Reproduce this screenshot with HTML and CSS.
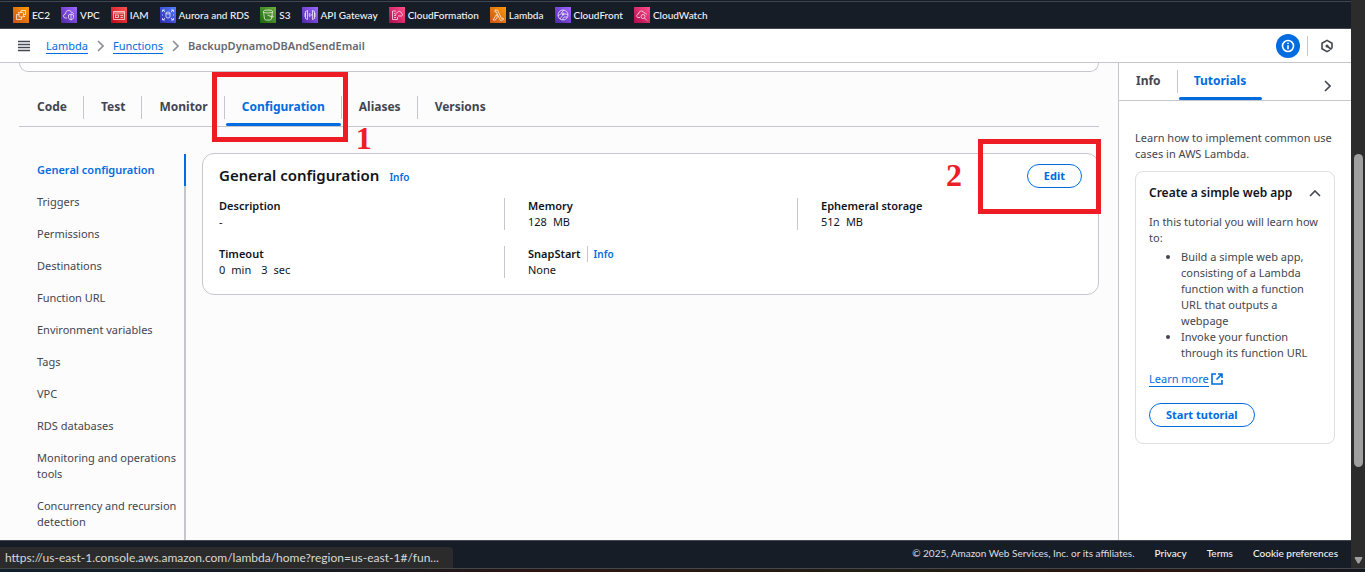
FILE: index.html
```html
<!DOCTYPE html>
<html lang="en">
<head>
<meta charset="utf-8">
<title>BackupDynamoDBAndSendEmail | Lambda</title>
<link rel="stylesheet" href="styles.css">
</head>
<body>
<div class="window">
  <div class="page">
    <nav class="services" aria-label="Favorite services">
      <a class="service" href="#"><svg class="service-icon orange" viewBox="0 0 16 16"><rect x="6" y="5.500" width="4.500" height="4.500" rx="1"/><path d="M6 7.500H3.500v5h5V10M8 5.500v-2h4.500v4h-2M10.500 9.500h1.500M5 5.500h1"/></svg>EC2</a>
      <a class="service" href="#"><svg class="service-icon purple" viewBox="0 0 16 16"><path d="M6 11H4.500a2 2 0 0 1 0-4c0-4 5-5 6-1.500 1.500 0 2 .5 2 1.500M7.500 8l2.500-1 2.500 1v2.500c0 1-1 1.800-2.500 2.500-1.500-.7-2.500-1.500-2.500-2.500zM10 7v6"/></svg>VPC</a>
      <a class="service" href="#"><svg class="service-icon red" viewBox="0 0 16 16"><path d="M2.500 4.500h11v8h-11zM2.500 6h11M9.500 8.500h2.500M9.500 10.500h2.500"/><rect x="4.500" y="8" width="3" height="2.500"/></svg>IAM</a>
      <a class="service" href="#"><svg class="service-icon blue" viewBox="0 0 16 16"><path d="M2.500 5V3H5M11 3h2.500v2M2.500 11v2H5M11 13h2.500v-2M3 3l2 2M13 3l-2 2M3 13l2-2M13 13l-2-2"/><ellipse cx="8" cy="6" rx="2" ry="1"/><path d="M6 6v4c0 1.300 4 1.300 4 0V6M2.500 7.500v1M13.500 7.500v1"/></svg>Aurora and RDS</a>
      <a class="service" href="#"><svg class="service-icon green" viewBox="0 0 16 16"><ellipse cx="8" cy="4.500" rx="4.500" ry="1.500"/><path d="M3.500 4.500l1 7.500c.3 1.500 6.700 1.500 7 0l1-7.500M7.500 8l4.500 2c2 .5 1-1 0-1.500"/></svg>S3</a>
      <a class="service" href="#"><svg class="service-icon purple" viewBox="0 0 16 16"><path d="M5.500 3.500l-2 1v7l2 1zM10.500 3.500l2 1v7l-2 1zM3 6v4M13 6v4M8 6L7 8l1 2M9 7v2"/></svg>API Gateway</a>
      <a class="service" href="#"><svg class="service-icon pink" viewBox="0 0 16 16"><path d="M7 4H3.500v8.500h5V10M5 8.500h2M5 10.500h2M5 6.500h1M9 9h3.500c1.500-.5 1.300-2.500 0-2.700C12 4 9 3.500 8.500 5.500 7 5.500 6.500 7 7 8"/></svg>CloudFormation</a>
      <a class="service" href="#"><svg class="service-icon orange" viewBox="0 0 16 16"><path d="M5 3h2.500l4 8.500 1.500-.5.500 1.500-3 1L7 6.500 6.500 5H5zM6.500 7.500L3 13h2.500l2-3.500z"/></svg>Lambda</a>
      <a class="service" href="#"><svg class="service-icon purple" viewBox="0 0 16 16"><circle cx="8" cy="8" r="5"/><path d="M3 9c2-2 3-1 4-4l2-2M5 12c1-3 3-2 3-5h3l2 1M8 13c-1-2 1-2 1-3h3"/><circle cx="8" cy="7" r="1"/></svg>CloudFront</a>
      <a class="service" href="#"><svg class="service-icon pink" viewBox="0 0 16 16"><path d="M6 10.500H4c-2-.5-1.500-3.500.5-3.500 0-3.500 5-4 5.500-1 1.500-.3 2 .5 2.500 1.500"/><circle cx="9" cy="9.500" r="2"/><path d="M10.500 11l2.500 2.500"/></svg>CloudWatch</a>
    </nav>

    <header class="topbar">
      <button class="icon-button menu-button" aria-label="Open navigation"><svg width="12" height="12" viewBox="0 0 12 12"><path d="M0 1.500h12M0 4.500h12M0 7.500h12M0 10.500h12"/></svg></button>
      <nav class="breadcrumbs" aria-label="Breadcrumbs">
        <a class="crumb" href="#">Lambda</a>
        <svg class="crumb-arrow" viewBox="0 0 7 12"><path d="M1 1l5 5-5 5"/></svg>
        <a class="crumb" href="#">Functions</a>
        <svg class="crumb-arrow" viewBox="0 0 7 12"><path d="M1 1l5 5-5 5"/></svg>
        <span class="crumb-current">BackupDynamoDBAndSendEmail</span>
      </nav>
      <div class="tools">
        <button class="icon-button info-button" aria-label="Info"><svg width="14" height="14" viewBox="0 0 14 14"><circle cx="7" cy="7" r="5.500"/><path d="M7 6.200v4M7 3.800v1.300"/></svg></button>
        <button class="icon-button hex-button" aria-label="Assistant"><svg width="14" height="14" viewBox="0 0 14 14"><path d="M12 9.500V4.200L7 1.400 2 4.200v5.600l5 2.800 2.800-1.500M7 7l4.500 3.500"/><circle class="dot" cx="7" cy="7" r="1.500"/></svg></button>
      </div>
    </header>

    <div class="body">
      <main class="content">
        <div class="overview-edge"></div>
        <nav class="tabs" aria-label="Function">
          <a class="tab" href="#"><span>Code</span></a>
          <a class="tab" href="#"><span>Test</span></a>
          <a class="tab" href="#"><span>Monitor</span></a>
          <a class="tab active" href="#" aria-current="page"><span>Configuration</span><i class="callout callout-tab"></i><b class="step step-one">1</b></a>
          <a class="tab" href="#"><span>Aliases</span></a>
          <a class="tab" href="#"><span>Versions</span></a>
        </nav>
        <div class="columns">
          <nav class="side" aria-label="Configuration">
            <a class="side-link current" href="#">General configuration</a>
            <a class="side-link" href="#">Triggers</a>
            <a class="side-link" href="#">Permissions</a>
            <a class="side-link" href="#">Destinations</a>
            <a class="side-link" href="#">Function URL</a>
            <a class="side-link" href="#">Environment variables</a>
            <a class="side-link" href="#">Tags</a>
            <a class="side-link" href="#">VPC</a>
            <a class="side-link" href="#">RDS databases</a>
            <a class="side-link" href="#">Monitoring and operations tools</a>
            <a class="side-link" href="#">Concurrency and recursion detection</a>
          </nav>
          <section class="card">
            <div class="card-head">
              <h2 class="card-title">General configuration</h2>
              <a class="info-link" href="#">Info</a>
              <button class="button edit">Edit</button>
            </div>
            <dl class="facts">
              <div class="fact"><dt>Description</dt><dd>-</dd></div>
              <div class="fact"><dt>Memory</dt><dd><span>128</span><span>MB</span></dd></div>
              <div class="fact"><dt>Ephemeral storage</dt><dd><span>512</span><span>MB</span></dd></div>
              <div class="fact"><dt>Timeout</dt><dd><span>0</span><span>min</span><span class="later">3</span><span>sec</span></dd></div>
              <div class="fact"><dt>SnapStart <a class="info-link split" href="#">Info</a></dt><dd>None</dd></div>
            </dl>
            <i class="callout callout-edit"></i><b class="step step-two">2</b>
          </section>
        </div>
      </main>

      <aside class="help">
        <div class="help-tabs">
          <a class="help-tab" href="#">Info</a>
          <a class="help-tab selected" href="#">Tutorials</a>
          <button class="icon-button collapse" aria-label="Close panel"><svg width="7" height="12" viewBox="0 0 7 12"><path d="M1 1l5 5-5 5"/></svg></button>
        </div>
        <div class="help-body">
          <p class="help-text">Learn how to implement common use cases in AWS Lambda.</p>
          <section class="tutorial">
            <div class="tutorial-head">
              <h3 class="tutorial-title">Create a simple web app</h3>
              <button class="icon-button" aria-label="Collapse tutorial"><svg width="12" height="7" viewBox="0 0 12 7"><path d="M1 6l5-5 5 5"/></svg></button>
            </div>
            <p class="help-text">In this tutorial you will learn how to:</p>
            <ul class="steps">
              <li>Build a simple web app, consisting of a Lambda function with a function URL that outputs a webpage</li>
              <li>Invoke your function through its function URL</li>
            </ul>
            <a class="learn" href="#"><span>Learn more</span><svg width="12" height="12" viewBox="0 0 12 12"><path d="M5 1H1v10h10V7M7 1h4v4M11 1L5.500 6.500"/></svg></a>
            <button class="button start">Start tutorial</button>
          </section>
        </div>
      </aside>
    </div>

    <footer class="footer">
      <span class="copyright">© 2025, Amazon Web Services, Inc. or its affiliates.</span>
      <a href="#">Privacy</a>
      <a href="#">Terms</a>
      <a href="#">Cookie preferences</a>
      <div class="status">https://us-east-1.console.aws.amazon.com/lambda/home?region=us-east-1#/fun...</div>
    </footer>
  </div>
  <div class="scrollbar"><div class="thumb"></div><svg class="down" viewBox="0 0 10 8"><path d="M1 0h8q1 1 0 2L6 7q-1 1-2 0L1 2Q0 1 1 0z"/></svg></div>
</div>
<div class="desktop-edge"></div>
</body>
</html>
```
FILE: styles.css
```css
* { box-sizing: border-box; }

body {
  margin: 0;
  display: flex;
  flex-direction: column;
  height: 100vh;
  overflow: hidden;
  background: #fcfcfd;
  color: #0f141a;
  font: 11px/16px "Noto Sans", "Open Sans", sans-serif;
}

a { color: inherit; text-decoration: none; }
h2, h3, p, dl, dd, ul { margin: 0; }
svg { fill: none; stroke: currentColor; flex: none; }

.window { display: flex; flex: 1; min-height: 0; }
.page { display: flex; flex: 1; flex-direction: column; min-width: 0; }
.desktop-edge {
  height: 4px;
  border-top: 1px solid #45484a;
  background: linear-gradient(90deg, #10202c, #171a20 25%, #2b1512 40%, #201d15 65%, #29150f 85%, #151820);
}

.services {
  display: flex;
  align-items: center;
  gap: 11px;
  height: 29px;
  padding: 0 13px;
  border-top: 1px solid #161d26;
  border-bottom: 1px solid #424650;
  background: #161d26;
  box-shadow: inset 0 1px #424650;
  color: #f3f3f7;
  font: 500 10px/16px Lato, "Noto Sans", sans-serif;
}
.service { display: flex; align-items: flex-end; gap: 3px; height: 18px; padding-bottom: 1px; white-space: nowrap; }
.service-icon { width: 16px; height: 16px; stroke: #fff; stroke-width: 0.7; }
.orange { background: linear-gradient(45deg, #c8511b, #ff9900); }
.purple { background: linear-gradient(45deg, #4d27a8, #a166ff); }
.red { background: linear-gradient(45deg, #bd0816, #ff5252); }
.blue { background: linear-gradient(45deg, #2e27ad, #527fff); }
.green { background: linear-gradient(45deg, #1b660f, #6cae3e); }
.pink { background: linear-gradient(45deg, #b0084d, #ff4f8b); }

.topbar {
  display: flex;
  align-items: center;
  height: 34px;
  padding: 0 17px 0 18px;
  border-bottom: 1px solid #c6c6cd;
  background: #fff;
}
.icon-button {
  display: flex;
  align-items: center;
  justify-content: center;
  padding: 0;
  border: 0;
  background: none;
  color: #424650;
}
.icon-button svg { stroke-width: 1.6; }
.menu-button svg { stroke-width: 1.4; }
.breadcrumbs { display: flex; align-items: center; gap: 9px; margin-left: 16px; }
.crumb { border-bottom: 1px solid #006ce0; color: #006ce0; line-height: 15px; }
.crumb-arrow { width: 7px; height: 12px; stroke: #8c8c94; stroke-width: 1.6; }
.crumb-current { color: #656871; font-weight: 600; }
.tools { display: flex; align-items: center; margin-left: auto; }
.info-button { width: 24px; height: 24px; border-radius: 50%; background: #006ce0; color: #fff; }
.hex-button { height: 20px; margin-left: 7px; padding-left: 12px; border-left: 1px solid #c6c6cd; }
.dot { fill: currentColor; stroke: none; }

.body { display: flex; flex: 1; min-height: 0; }
.content { flex: 1; display: flex; flex-direction: column; min-width: 0; padding: 0 19px; }
.overview-edge {
  height: 9px;
  flex: none;
  border: 1px solid #c6c6cd;
  border-top: 0;
  border-radius: 0 0 12px 12px;
  background: #fff;
}

.tabs {
  display: flex;
  flex: none;
  height: 55px;
  padding-top: 17px;
  border-bottom: 1px solid #c6c6cd;
  color: #424650;
  font-size: 12px;
  font-weight: 700;
}
.tab { position: relative; padding: 10px 16px 0 18px; }
.tab + .tab::before {
  content: "";
  position: absolute;
  left: 0;
  top: 7px;
  height: 23px;
  border-left: 1px solid #c6c6cd;
}
.active { color: #006ce0; }
.active::after {
  content: "";
  position: absolute;
  left: 2px;
  right: 0;
  bottom: 0;
  height: 3px;
  border-radius: 2px;
  background: #006ce0;
}

.callout { position: absolute; z-index: 2; border: 5px solid #ee1c25; pointer-events: none; }
.callout-tab { top: -17px; bottom: -16px; left: -12px; right: -7px; }
.callout-edit { top: -15px; right: -3px; width: 123px; height: 75px; }
.step { position: absolute; z-index: 2; color: #ee1c25; font: bold 32px/32px "Liberation Serif", serif; }
.step-one { left: 100%; top: 33px; margin-left: 15px; }
.step-two { right: 136px; top: 5px; }

.columns { display: flex; flex: 1; gap: 16px; min-height: 0; padding-top: 26px; }
.side { flex: none; width: 167px; margin-top: 1px; border-right: 2px solid #c6c6cd; color: #424650; }
.side-link { display: block; padding: 8px 4px 8px 18px; }
.current { margin-right: -2px; border-right: 2px solid #006ce0; color: #006ce0; font-weight: 600; }

.card {
  position: relative;
  flex: 1;
  align-self: flex-start;
  padding: 10px 16px 16px;
  border: 1px solid #c6c6cd;
  border-radius: 12px;
  background: #fff;
}
.card-head { display: flex; align-items: baseline; }
.card-title { font-size: 15px; line-height: 22px; font-weight: 600; }
.info-link { margin-left: 10px; color: #006ce0; font-size: 10px; font-weight: 600; }
.split { margin-left: 6px; padding-left: 6px; border-left: 1px solid #c6c6cd; }
.button {
  height: 24px;
  padding: 0 16px;
  border: 1px solid #006ce0;
  border-radius: 12px;
  background: #fff;
  color: #006ce0;
  font: 700 11px/16px "Noto Sans", "Open Sans", sans-serif;
}
.edit { align-self: center; margin-left: auto; }
.facts { display: grid; grid-template-columns: 285fr 293fr 285fr; gap: 16px 0; margin-top: 10px; }
.fact { min-width: 0; }
.fact:not(:nth-child(3n + 1)) { padding-left: 23px; border-left: 1px solid #c6c6cd; }
.fact dt { display: flex; font-weight: 600; }
.fact dd { display: flex; gap: 6px; }
.later { margin-left: 4px; }

.help { flex: none; width: 233px; border-left: 1px solid #c6c6cd; background: #fff; }
.help-tabs { display: flex; height: 38px; border-bottom: 1px solid #c6c6cd; font-size: 12px; font-weight: 700; }
.help-tab { position: relative; padding: 10px 16px 0 17px; color: #424650; }
.help-tab.selected { color: #006ce0; }
.selected::before { content: ""; position: absolute; left: 0; top: 7px; height: 23px; border-left: 1px solid #c6c6cd; }
.selected::after { content: ""; position: absolute; left: 2px; right: 0; bottom: 0; height: 3px; border-radius: 2px; background: #006ce0; }
.collapse { margin: 9px 20px 0 auto; }
.help-body { padding: 29px 16px 0; color: #424650; }
.tutorial { margin-top: 9px; padding: 12px 13px 16px; border: 1px solid #dedee3; border-radius: 8px; }
.tutorial-head { display: flex; justify-content: space-between; margin-bottom: 12px; }
.tutorial-title { color: #0f141a; font-size: 12px; line-height: 18px; font-weight: 600; }
.steps { margin-top: 3px; padding-left: 32px; }
.learn { display: flex; align-items: center; gap: 2px; margin: 10px 0 16px; color: #006ce0; }
.learn span { border-bottom: 1px solid #006ce0; line-height: 15px; }
.learn svg { stroke-width: 1.6; }

.footer {
  position: relative;
  display: flex;
  flex: none;
  align-items: center;
  justify-content: flex-end;
  gap: 20px;
  height: 28px;
  padding: 0 13px 3px 0;
  border-top: 1px solid #424650;
  background: #161d26;
  color: #f3f3f7;
  font: 500 10px/16px Lato, "Noto Sans", sans-serif;
}
.copyright { color: #dedee3; font-weight: 400; }
.status {
  position: absolute;
  left: 0;
  bottom: 0;
  padding: 3px 14px 2px 5px;
  border-radius: 0 4px 0 0;
  background: #2b2b2b;
  color: #d8d8d8;
  font: 12px/16px Lato, "Open Sans", sans-serif;
}

.scrollbar { position: relative; flex: none; width: 14px; background: #2c2c2c; }
.thumb { position: absolute; left: 3px; top: 154px; width: 9px; height: 313px; border-radius: 5px; background: #9f9f9f; }
.down { position: absolute; left: 3px; bottom: 4px; width: 9px; height: 7px; fill: #9f9f9f; stroke: none; }
```
